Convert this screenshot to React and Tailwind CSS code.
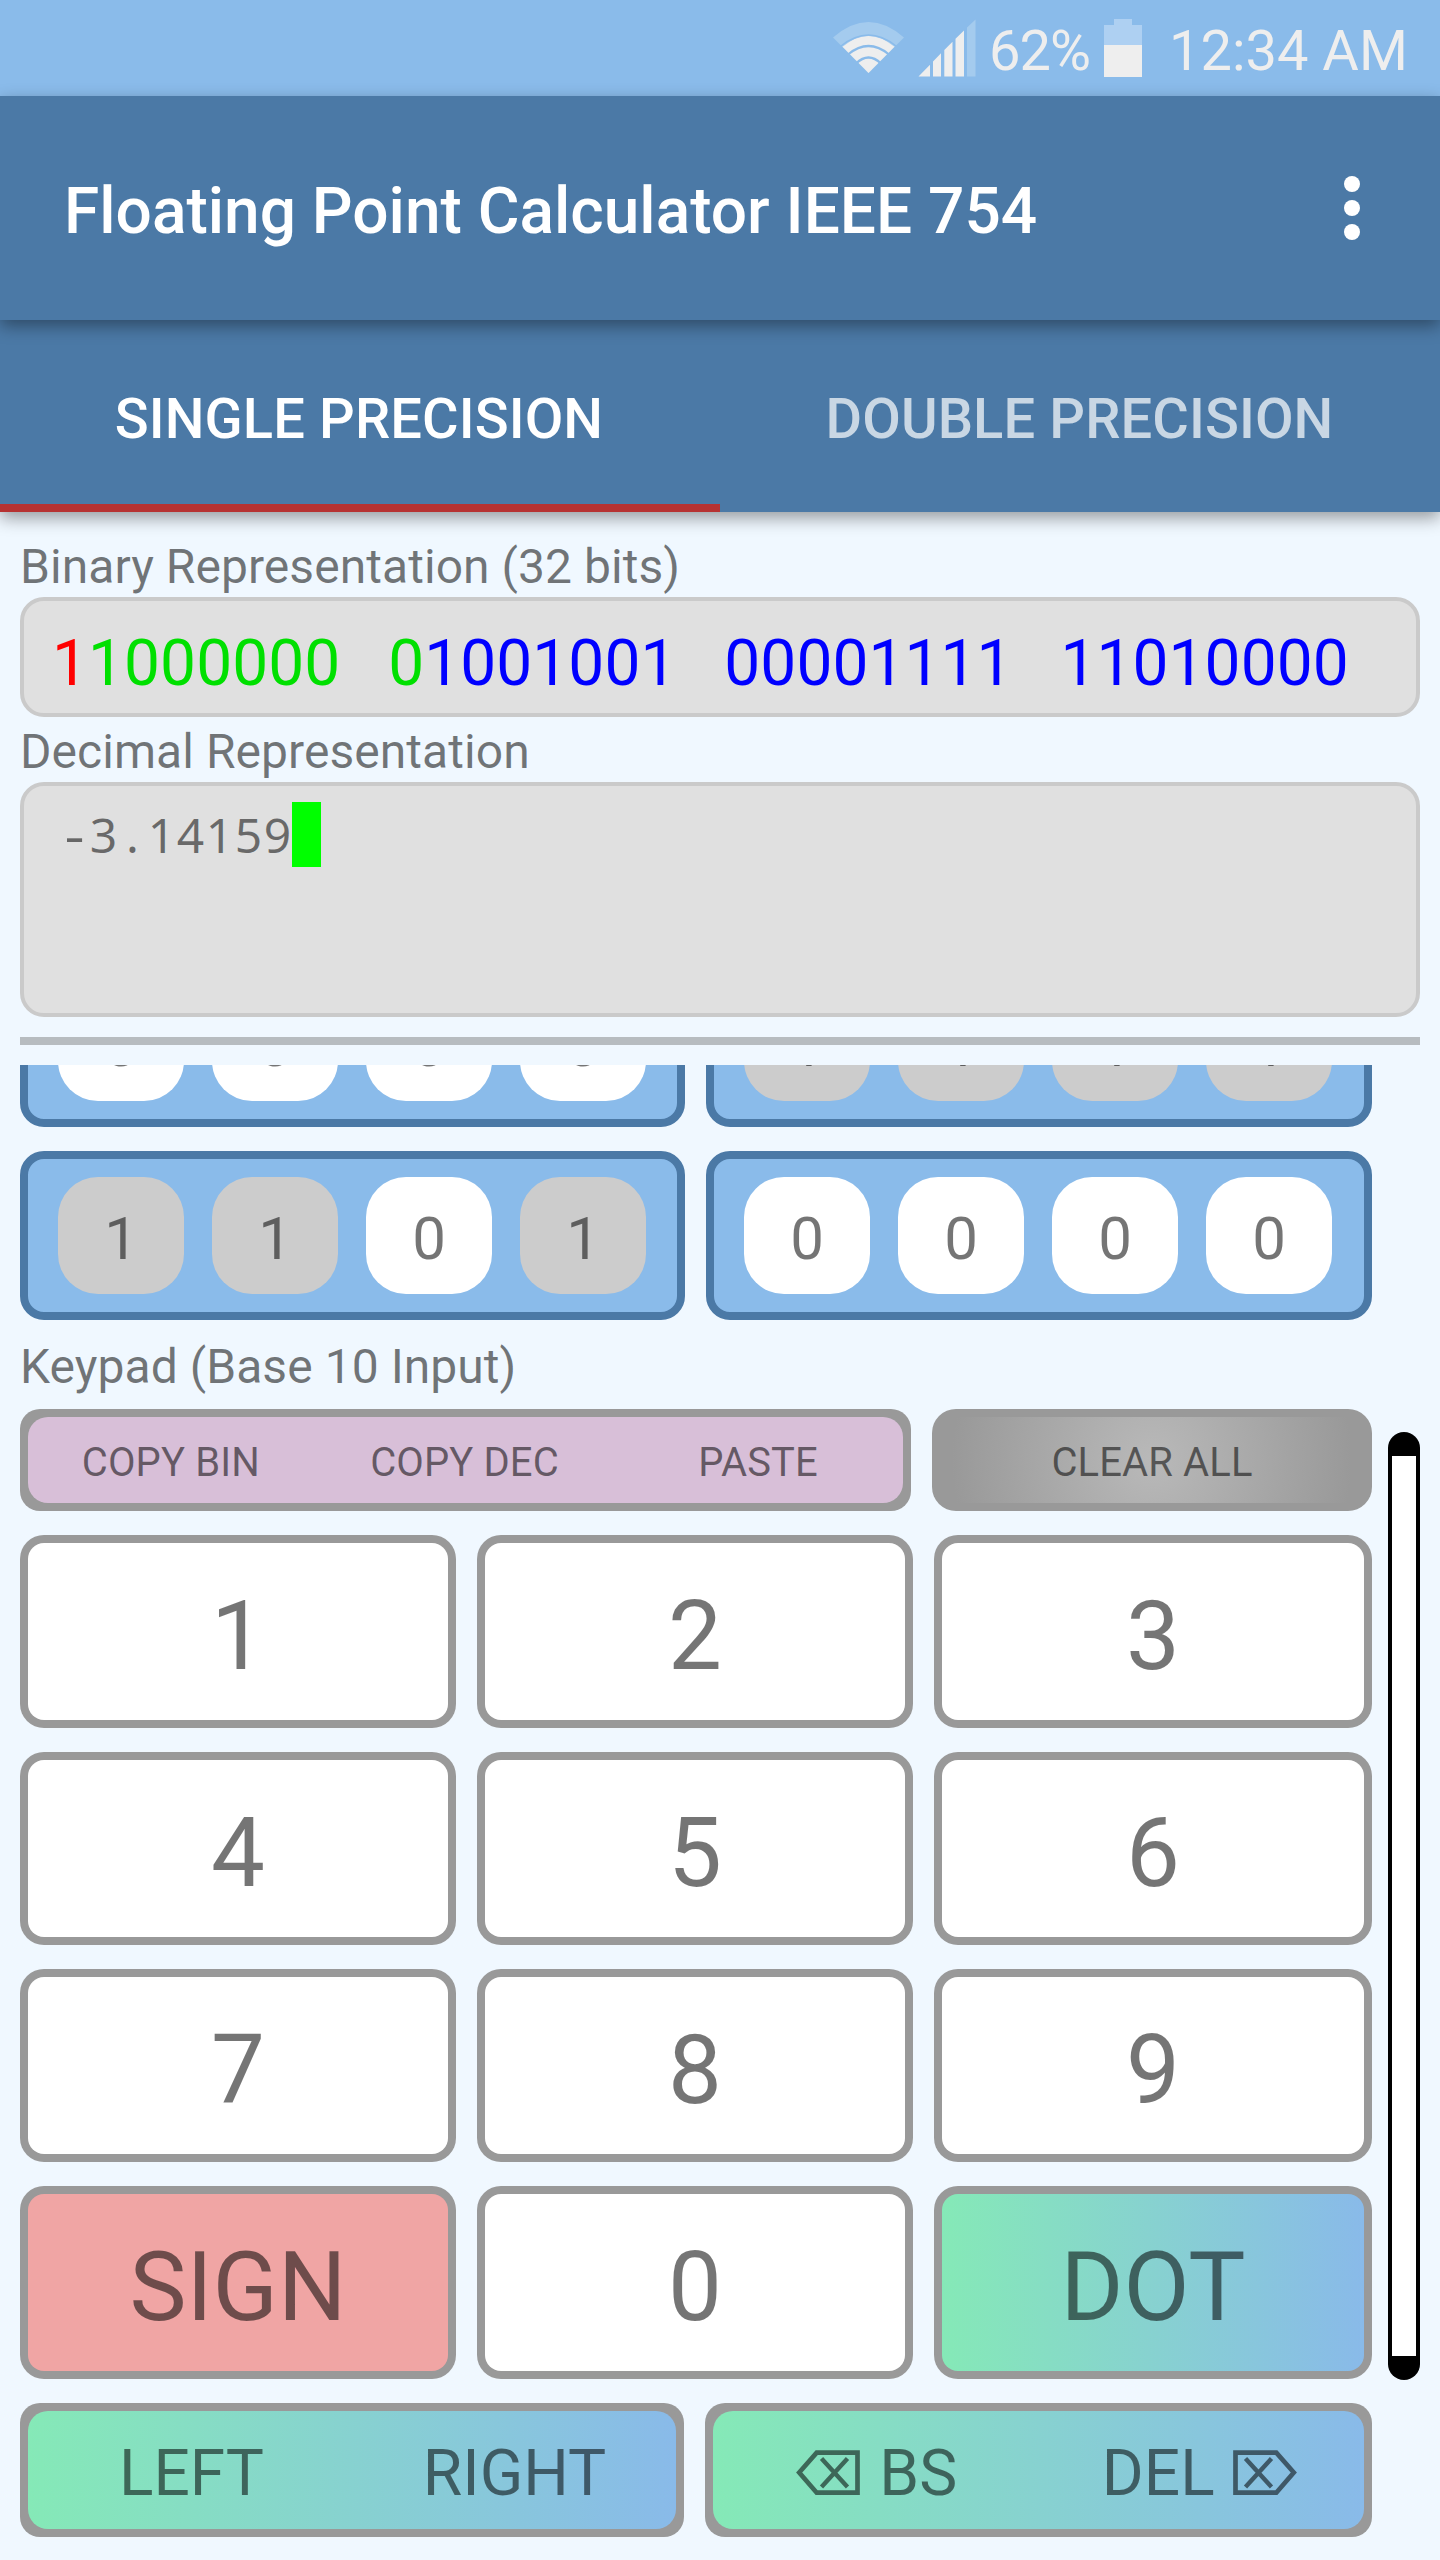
import React from "react";

const label = "font-[Roboto] text-[48px] leading-[56px] tracking-[0.05px] text-black/54 whitespace-nowrap";

function StatusBar() {
  return (
    <div className="flex h-[96px] items-center bg-[#8abbea] text-[#eeeeee]">
      <svg className="ml-[833px] block shrink-0" width="72" height="96" viewBox="833 0 72 96" fill="#eee">
        <path d="M868.500 73 L833 37.500 Q868.500 6.500 904 37.500 Z" fill="#a4cbee" />
        <path d="M868.500 73 L842.500 46.800 Q868.500 25 894.500 46.800 Z" />
        <path d="M841 46 Q868.500 24 896 46" fill="none" stroke="#8abbea" strokeWidth="1.5" />
        <path d="M848 54.500 Q868.500 37.500 889 54.500" fill="none" stroke="#8abbea" strokeWidth="2.2" />
        <path d="M856 63.500 Q868.500 51.500 881 63.500" fill="none" stroke="#8abbea" strokeWidth="2.2" />
      </svg>
      <svg className="ml-[13px] block shrink-0" width="58" height="96" viewBox="918 0 58 96" fill="#eee">
        <path d="M918.5 76.500 L930 64.800 V76.500 Z M933 76.500 V61.500 L941 53.300 V76.500 Z M944.300 76.500 V50 L952.500 41.700 V76.500 Z M955.500 76.500 V38.700 L964 30.500 V76.500 Z" />
        <path d="M967 76.500 V27.500 L975.500 19.500 V76.500 Z" fill="#a4cbee" />
      </svg>
      <span className="ml-[13px] mt-[5px] w-[113px] shrink-0 font-[Roboto] text-[56px] leading-none tracking-[-1px]">62%</span>
      <svg className="ml-[2px] block shrink-0" width="38" height="96" viewBox="1104 0 38 96">
        <path d="M1104 45 V25 H1114 V19 H1132 V25 H1142 V45 Z" fill="#aed0f2" />
        <path d="M1104 45 H1142 V77 H1104 Z" fill="#eee" />
      </svg>
      <span className="ml-[27px] mt-[5px] shrink-0 whitespace-nowrap font-[Roboto] text-[56px] leading-none">12:34 AM</span>
    </div>
  );
}

function AppBar() {
  return (
    <div className="relative z-20 flex h-[224px] items-center justify-between bg-[#4b79a6] pl-[64px] pr-[80px] shadow-[0_6px_16px_rgba(0,0,0,0.38)]">
      <h1 className="mt-[7px] whitespace-nowrap font-[Roboto] text-[64px] font-medium leading-none text-white">
        Floating Point Calculator IEEE 754
      </h1>
      <div className="flex flex-col gap-[8px]">
        <div className="size-[16px] rounded-full bg-white" />
        <div className="size-[16px] rounded-full bg-white" />
        <div className="size-[16px] rounded-full bg-white" />
      </div>
    </div>
  );
}

function Tabs() {
  return (
    <div className="relative z-10 grid h-[192px] grid-cols-2 bg-[#4b79a6] font-[Roboto] text-[56px] font-medium leading-none tracking-[0.12px] shadow-[0_6px_16px_rgba(0,0,0,0.38)]">
      <div className="flex items-center justify-center border-b-8 border-[#b63232] pr-[2px] pt-[14px] text-white">SINGLE PRECISION</div>
      <div className="flex items-center justify-center pr-[1px] pt-[6px] text-white/70">DOUBLE PRECISION</div>
    </div>
  );
}

function BitGroup({ bits }) {
  return (
    <div className="flex h-[169px] items-center gap-[28px] rounded-[24px] border-8 border-[#4b79a6] bg-[#8abbea] pl-[30px]">
      {bits.split("").map((b, i) => (
        <div
          key={i}
          className={
            (b === "1" ? "bg-[#cccccc]" : "bg-white") +
            " flex h-[117px] w-[126px] shrink-0 items-center justify-center rounded-[40px] pt-[7px] font-[Roboto] text-[60px] leading-none text-black/54"
          }
        >
          {b}
        </div>
      ))}
    </div>
  );
}

function Key({ children, fill = "bg-white" }) {
  return (
    <div className="h-[193px] rounded-[24px] bg-[#999999] p-[8px]">
      <div className={fill + " flex h-full items-center justify-center rounded-[16px] pt-[9px] font-[Roboto] text-[96px] leading-none text-black/54"}>
        {children}
      </div>
    </div>
  );
}

const gradient = "bg-[linear-gradient(90deg,#85e9b7,#89bae9)]";

function DeleteIcon({ flip }) {
  return (
    <svg className={(flip ? "-scale-x-100 " : "") + "mt-[-1px] block"} width="64" height="46" viewBox="0 0 64 46" fill="none" stroke="#000" strokeOpacity="0.54">
      <path d="M3.200 22.500 L20.700 2.700 H61.500 V42.700 H20.700 Z" strokeWidth="4.700" />
      <path d="M25.500 8.500 L51.500 37 M51.500 8.500 L25.500 37" strokeWidth="4.400" />
    </svg>
  );
}

export default function App() {
  return (
    <div className="h-[2560px] w-[1440px] overflow-hidden bg-[#f0f8ff]">
      <StatusBar />
      <AppBar />
      <Tabs />
      <main className="px-[20px]">
        <div className={label + " mt-[27px] h-[58px]"}>Binary Representation (32 bits)</div>
        <div className="flex h-[120px] items-center whitespace-pre rounded-[24px] border-4 border-[#cacaca] bg-[#e0e0e0] pl-[28px] pt-[13px] font-[Roboto] text-[64px] leading-none tracking-[0.07px] text-[#0000ff]">
          <span className="text-[#ff0000]">1</span>
          <span className="text-[#00e000]">{"1000000   0"}</span>
          <span>{"1001001   00001111   11010000"}</span>
        </div>
        <div className={label + " mt-[7px] h-[58px]"}>Decimal Representation</div>
        <div className="flex h-[235px] rounded-[24px] border-4 border-[#cacaca] bg-[#e0e0e0] pl-[36px] pt-[16px]">
          {"-3.14159".split("").map((c, i) => (
            <span
              key={i}
              className={
                (c === "-" ? "scale-x-130 " : "") +
                "w-[29px] text-center font-['Noto_Sans'] text-[48px] leading-[65px] text-black/54"
              }
            >
              {c}
            </span>
          ))}
          <div className="h-[65px] w-[29px] bg-[#00ff00]" />
        </div>
        <div className="mt-[20px] h-[8px] bg-[#b7bcc0]" />

        <div className="mt-[20px] flex h-[255px] w-[1352px] flex-col justify-end gap-[24px] overflow-hidden">
          <div className="grid shrink-0 grid-cols-[665px_666px] gap-[21px]">
            <BitGroup bits="0000" />
            <BitGroup bits="1111" />
          </div>
          <div className="grid shrink-0 grid-cols-[665px_666px] gap-[21px]">
            <BitGroup bits="1101" />
            <BitGroup bits="0000" />
          </div>
        </div>

        <div className={label + " mt-[19px] h-[70px]"}>Keypad (Base 10 Input)</div>

        <div className="flex">
          <div className="flex w-[1352px] flex-col gap-[24px]">
            <div className="grid grid-cols-[891px_440px] gap-[21px] font-[Roboto] text-[40px] leading-none tracking-[0.12px] text-black/54">
              <div className="h-[102px] rounded-[20px] bg-[#999999] p-[8px]">
                <div className="h-full rounded-[20px] bg-[#d8bfd8]">
                  <div className="-ml-[4px] -mr-[2px] grid h-full grid-cols-3 items-center pt-[6px] text-center">
                    <span>COPY BIN</span>
                    <span>COPY DEC</span>
                    <span>PASTE</span>
                  </div>
                </div>
              </div>
              <div className="h-[102px] rounded-[24px] bg-[#999999] p-[8px]">
                <div className="flex h-full items-center justify-center rounded-[16px] bg-[radial-gradient(circle_200px_at_center,#b9b9b9,#999999)] pt-[6px]">
                  CLEAR ALL
                </div>
              </div>
            </div>
            <div className="grid grid-cols-[436px_436px_438px] gap-x-[21px] gap-y-[24px]">
              <Key>1</Key>
              <Key>2</Key>
              <Key>3</Key>
              <Key>4</Key>
              <Key>5</Key>
              <Key>6</Key>
              <Key>7</Key>
              <Key>8</Key>
              <Key>9</Key>
              <Key fill="bg-[#f0a5a4]">SIGN</Key>
              <Key>0</Key>
              <Key fill={gradient}>DOT</Key>
            </div>
            <div className="grid grid-cols-[664px_667px] gap-[21px] font-[Roboto] text-[64px] leading-none text-black/54">
              <div className="h-[134px] rounded-[20px] bg-[#999999] p-[8px]">
                <div className={gradient + " grid h-full grid-cols-2 items-center rounded-[20px] pl-[2px] pt-[7px] text-center"}>
                  <span>LEFT</span>
                  <span>RIGHT</span>
                </div>
              </div>
              <div className="h-[134px] rounded-[20px] bg-[#999999] p-[8px]">
                <div className={gradient + " grid h-full grid-cols-2 items-center rounded-[20px] pt-[7px]"}>
                  <div className="flex items-center justify-center gap-[19px] pl-[2px]">
                    <DeleteIcon />
                    <span>BS</span>
                  </div>
                  <div className="flex items-center justify-center gap-[18px] pr-[4px]">
                    <span>DEL</span>
                    <DeleteIcon flip />
                  </div>
                </div>
              </div>
            </div>
          </div>
          <div className="ml-[16px] mt-[23px] h-[948px] w-[32px] rounded-full bg-black px-[4px] py-[24px]">
            <div className="h-full bg-white" />
          </div>
        </div>
      </main>
    </div>
  );
}
